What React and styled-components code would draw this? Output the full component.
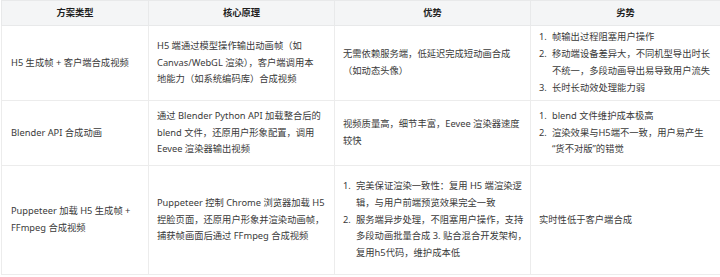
import React from 'react'
import styled, {createGlobalStyle} from 'styled-components'

const GlobalStyle = createGlobalStyle`
  body {
    margin: 0;
    background: #ffffff;
    font-family: "Noto Sans", "Noto Sans CJK SC", sans-serif;
    color: #333333;
  }
`

const Table = styled.table`
  width: 719px;
  margin-left: 1px;
  border-collapse: collapse;
  table-layout: fixed;
  font-size: 9.3px;
  line-height: 16.8px;
`

const HeadCell = styled.th`
  height: 24px;
  padding: 0 8px;
  background: #f4f5f6;
  border: 1px solid #e8e9ea;
  font-weight: 700;
  color: #1f1f1f;
  text-align: center;
  vertical-align: middle;
`

const Row = styled.tr`
  height: ${p => p.$h}px;
`

const Cell = styled.td`
  padding: 0 8px 0 ${p => (p.$first ? 9 : 8)}px;
  border: 1px solid #ececec;
  vertical-align: middle;
  white-space: nowrap;
  color: #3a3a3a;
`

const Line = styled.div``

const List = styled.ol`
  margin: 0;
  padding: 0;
  list-style: none;
`

const Item = styled.li`
  display: flex;
`

const Num = styled.span`
  flex: 0 0 13px;
`

const Lines = ({lines}) => lines.map((l, i) => <Line key={i}>{l}</Line>)

const Content = ({value}) =>
  value.list ? (
    <List>
      {value.list.map((lines, i) => (
        <Item key={i}>
          <Num>{i + 1}.</Num>
          <div>
            <Lines lines={lines} />
          </div>
        </Item>
      ))}
    </List>
  ) : (
    <Lines lines={value} />
  )

const heads = ['方案类型', '核心原理', '优势', '劣势']

const rows = [
  {
    h: 75,
    cells: [
      ['H5 生成帧 + 客户端合成视频'],
      ['H5 端通过模型操作输出动画帧（如', 'Canvas/WebGL 渲染），客户端调用本', '地能力（如系统编码库）合成视频'],
      ['无需依赖服务端，低延迟完成短动画合成', '（如动态头像）'],
      {
        list: [
          ['帧输出过程阻塞用户操作'],
          ['移动端设备差异大，不同机型导出时长', '不统一，多段动画导出易导致用户流失'],
          ['长时长动效处理能力弱'],
        ],
      },
    ],
  },
  {
    h: 65,
    cells: [
      ['Blender API 合成动画'],
      ['通过 Blender Python API 加载整合后的', 'blend 文件，还原用户形象配置，调用', 'Eevee 渲染器输出视频'],
      ['视频质量高，细节丰富，Eevee 渲染器速度', '较快'],
      {
        list: [['blend 文件维护成本极高'], ['渲染效果与H5端不一致，用户易产生', '“货不对版”的错觉']],
      },
    ],
  },
  {
    h: 109,
    cells: [
      ['Puppeteer 加载 H5 生成帧 +', 'FFmpeg 合成视频'],
      ['Puppeteer 控制 Chrome 浏览器加载 H5', '捏脸页面，还原用户形象并渲染动画帧，', '捕获帧画面后通过 FFmpeg 合成视频'],
      {
        list: [
          ['完美保证渲染一致性：复用 H5 端渲染逻', '辑，与用户前端预览效果完全一致'],
          ['服务端异步处理，不阻塞用户操作，支持', '多段动画批量合成 3. 贴合混合开发架构，', '复用h5代码，维护成本低'],
        ],
      },
      ['实时性低于客户端合成'],
    ],
  },
]

const App = () => (
  <>
    <GlobalStyle />
    <Table>
      <colgroup>
        <col style={{width: 147}} />
        <col style={{width: 186}} />
        <col style={{width: 196}} />
        <col style={{width: 190}} />
      </colgroup>
      <thead>
        <tr>
          {heads.map(h => (
            <HeadCell key={h}>{h}</HeadCell>
          ))}
        </tr>
      </thead>
      <tbody>
        {rows.map((r, i) => (
          <Row key={i} $h={r.h}>
            {r.cells.map((c, j) => (
              <Cell key={j} $first={j === 0}>
                <Content value={c} />
              </Cell>
            ))}
          </Row>
        ))}
      </tbody>
    </Table>
  </>
)

export default App
